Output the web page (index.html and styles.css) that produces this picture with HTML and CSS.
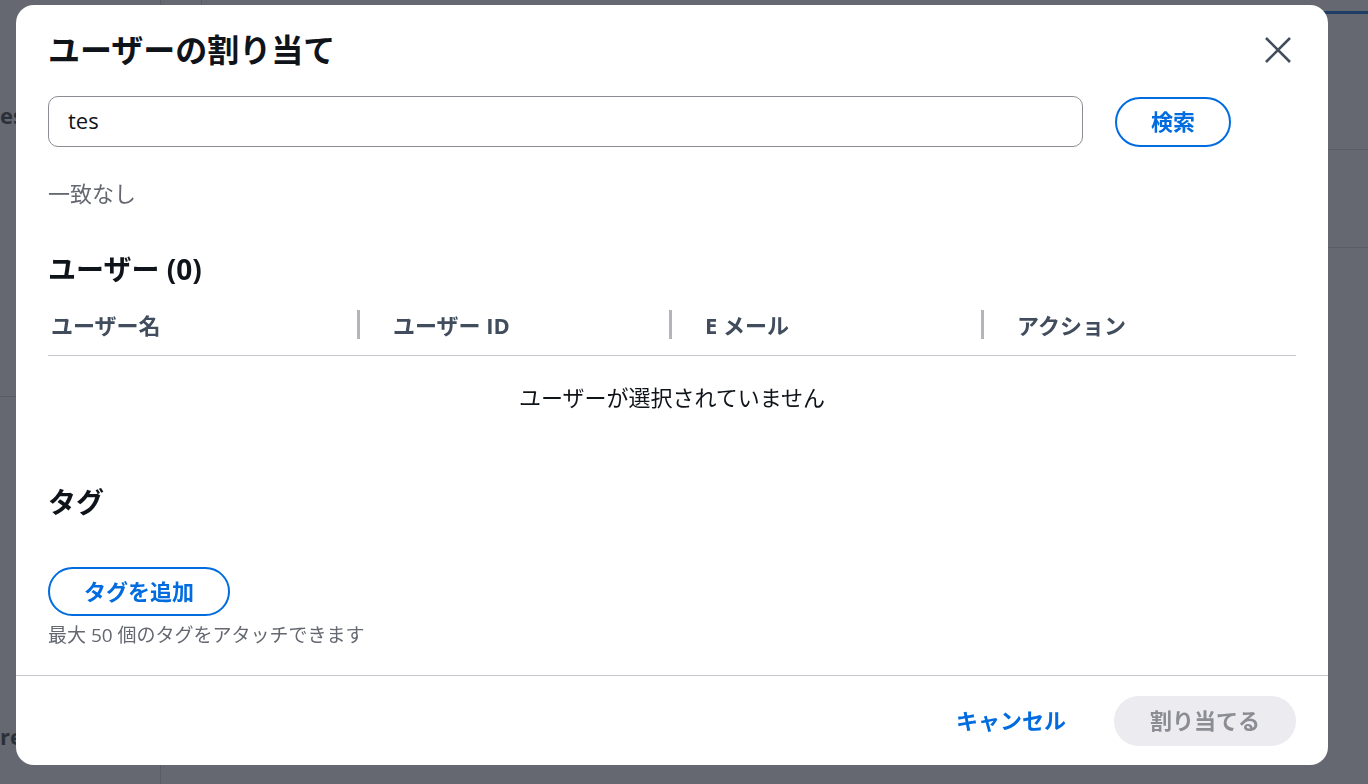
FILE: index.html
```html
<!DOCTYPE html>
<html lang="ja">
<head>
    <meta charset="UTF-8">
    <meta name="viewport" content="width=device-width, initial-scale=1.0">
    <title>ユーザーの割り当て</title>
    <link rel="stylesheet" href="styles.css">
</head>
<body>
    <div class="page">
        <aside class="sidebar">
            <div class="side-group">
                <div class="side-link">es</div>
            </div>
            <div class="side-group side-bottom">
                <div class="side-link">re</div>
            </div>
        </aside>
        <main class="main">
            <div class="main-head">
                <div class="crumb"></div>
                <div class="tab"></div>
            </div>
            <div class="main-row"></div>
        </main>
    </div>

    <div class="overlay">
        <div class="modal">
            <div class="modal-header">
                <h1>ユーザーの割り当て</h1>
                <button class="close-btn" type="button" aria-label="閉じる">
                    <svg width="28" height="28" viewBox="0 0 28 28">
                        <path d="M2 2 L26 26 M26 2 L2 26" stroke="#414d5c" stroke-width="2.6" fill="none"/>
                    </svg>
                </button>
            </div>

            <div class="modal-body">
                <div class="search-row">
                    <input class="search-input" type="text" value="tes">
                    <button class="btn btn-normal" type="button">検索</button>
                </div>
                <p class="status">一致なし</p>

                <h2 class="section-title">ユーザー (0)</h2>
                <div class="table-head">
                    <div class="th"><span>ユーザー名</span></div>
                    <div class="th"><span class="sep"></span><span>ユーザー ID</span></div>
                    <div class="th"><span class="sep"></span><span>E メール</span></div>
                    <div class="th"><span class="sep"></span><span>アクション</span></div>
                </div>
                <p class="empty">ユーザーが選択されていません</p>

                <h2 class="section-title tags-title">タグ</h2>
                <button class="btn btn-normal add-tag" type="button">タグを追加</button>
                <p class="hint">最大 50 個のタグをアタッチできます</p>
            </div>

            <div class="modal-footer">
                <button class="btn btn-link" type="button">キャンセル</button>
                <button class="btn btn-disabled" type="button" disabled>割り当てる</button>
            </div>
        </div>
    </div>
</body>
</html>
```

FILE: styles.css
```css
body {
    margin: 0;
    height: 100vh;
    overflow: hidden;
    background-color: #656871;
    font-family: "Open Sans", "Noto Sans CJK JP", sans-serif;
    color: #0f141a;
}

/* page behind the dialog, already dimmed */
.page {
    display: flex;
    height: 100%;
}

.sidebar {
    width: 160px;
    border-right: 1px solid #585c65;
    display: flex;
    flex-direction: column;
    overflow: hidden;
}

.side-group {
    height: 396px;
    border-bottom: 1px solid #585c65;
}

.side-bottom {
    border-bottom: none;
    height: auto;
}

.side-link {
    padding-top: 100px;
    font-size: 22px;
    font-weight: 700;
    color: #2c3038;
    white-space: nowrap;
}

.side-bottom .side-link {
    padding-top: 324px;
}

.main {
    flex: 1;
    display: flex;
    flex-direction: column;
}

.main-head {
    height: 149px;
    border-bottom: 1px solid #585c65;
    display: flex;
    justify-content: space-between;
    align-items: flex-start;
}

.crumb {
    width: 40px;
    height: 5px;
    border-right: 1px solid #585c65;
}

.tab {
    width: 80px;
    height: 11px;
    border-bottom: 3px solid #1f3c67;
}

.main-row {
    height: 97px;
    border-bottom: 1px solid #585c65;
}

/* dialog */
.overlay {
    position: fixed;
    inset: 0;
    padding: 5px 40px 19px 16px;
    display: flex;
}

.modal {
    width: 1312px;
    height: 760px;
    background-color: #fff;
    border-radius: 18px;
    display: flex;
    flex-direction: column;
    box-sizing: border-box;
}

.modal-header {
    display: flex;
    justify-content: space-between;
    align-items: center;
    padding: 21px 36px 0 32px;
    height: 48px;
}

.modal-header h1 {
    margin: 0;
    font-size: 32px;
    line-height: 48px;
    font-weight: 700;
}

.close-btn {
    background: none;
    border: none;
    padding: 0;
    width: 28px;
    height: 28px;
    cursor: pointer;
}

.modal-body {
    flex: 1;
    padding: 22px 32px 0 32px;
    display: flex;
    flex-direction: column;
    align-items: flex-start;
}

.search-row {
    display: flex;
    gap: 32px;
    align-items: center;
}

.search-input {
    width: 1035px;
    height: 51px;
    box-sizing: border-box;
    border: 1px solid #8c8c94;
    border-radius: 10px;
    padding: 0 19px 3px 19px;
    font-family: inherit;
    font-size: 22px;
    color: #0f141a;
}

.btn {
    font-family: inherit;
    font-size: 22px;
    font-weight: 700;
    height: 50px;
    border-radius: 25px;
    padding: 0 34px 4px 34px;
    cursor: pointer;
    box-sizing: border-box;
}

.btn-normal {
    background-color: #fff;
    border: 2px solid #006ce0;
    color: #006ce0;
}

.btn-link {
    background: none;
    border: none;
    color: #006ce0;
    padding: 0 36px 4px 36px;
}

.btn-disabled {
    background-color: #ebebf0;
    border: 2px solid #ebebf0;
    color: #8c8c94;
    cursor: default;
}

.status {
    margin: 30px 0 0 0;
    font-size: 22px;
    line-height: 32px;
    color: #656871;
}

.section-title {
    margin: 42px 0 0 0;
    font-size: 28px;
    line-height: 36px;
    font-weight: 700;
}

.table-head {
    margin-top: 10px;
    width: 100%;
    display: grid;
    grid-template-columns: repeat(4, 1fr);
    border-bottom: 1px solid #c6c6cd;
    height: 58px;
}

.th {
    display: flex;
    align-items: center;
    padding: 0 0 4px 3px;
    font-size: 22px;
    font-weight: 700;
    color: #414d5c;
}

.sep {
    width: 3px;
    height: 29px;
    background-color: #b4b4bb;
    margin-left: -6px;
    margin-right: 33px;
}

.empty {
    width: 100%;
    margin: 25px 0 0 0;
    text-align: center;
    font-size: 22px;
    line-height: 32px;
}

.tags-title {
    margin-top: 71px;
}

.add-tag {
    margin-top: 47px;
    height: 49px;
}

.hint {
    margin: 5px 0 0 0;
    font-size: 19px;
    line-height: 28px;
    color: #656871;
}

.modal-footer {
    border-top: 1px solid #c6c6cd;
    height: 90px;
    box-sizing: border-box;
    padding: 0 32px 0 0;
    display: flex;
    justify-content: flex-end;
    align-items: center;
    gap: 12px;
}
```
